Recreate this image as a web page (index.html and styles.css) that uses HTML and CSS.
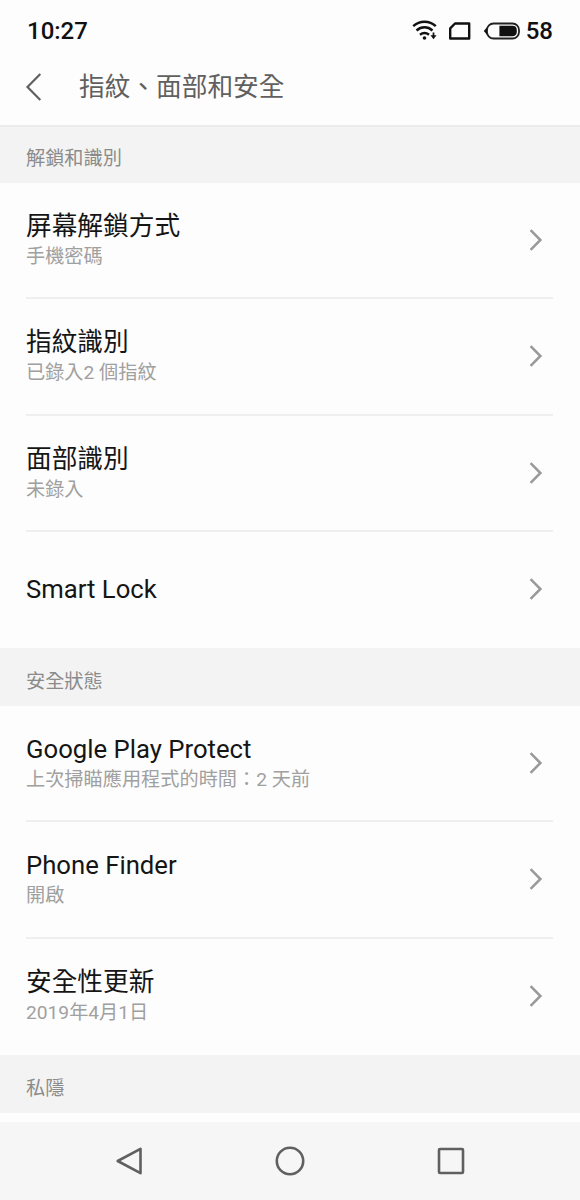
FILE: index.html
```html
<!DOCTYPE html>
<html lang="zh-Hant">
<head>
<meta charset="utf-8">
<title>指紋、面部和安全</title>
<link rel="stylesheet" href="styles.css">
</head>
<body>
<svg class="defs" width="0" height="0"><symbol id="chevron" viewBox="0 0 16 24"><path d="M2.6 2.2 12.4 12 2.6 21.8" fill="none" stroke="currentColor" stroke-width="2.5"/></symbol></svg>
<div class="screen">
  <div class="status">
    <span class="time">10:27</span>
    <svg class="wifi" width="26" height="22" viewBox="0 0 26 22" fill="none" stroke="#111" stroke-width="2.5">
      <path d="M1.2 6.1C7.7.2 17.3.2 23.8 6.1M4.5 10.5c4.8-4.2 11.2-4.2 16 0M8 14.7c2.7-2.1 6.3-2.1 9 0"/>
      <circle cx="12.5" cy="18" r="1.8" fill="#111" stroke="none"/>
      <path d="M21.5 12.5v4" stroke-width="1.7"/><path d="M18.5 15.3h6l-3 4z" fill="#111" stroke="none"/>
    </svg>
    <svg class="sim" width="24" height="20" viewBox="0 0 24 20"><path d="M7 2.5h14.2v15H2.2V7.3z" fill="none" stroke="#111" stroke-width="2.4" stroke-linejoin="round"/></svg>
    <svg class="battery" width="38" height="20" viewBox="0 0 38 20"><rect x="4" y="2.5" width="32" height="15" rx="6.5" fill="none" stroke="#222" stroke-width="1.8"/><path d="M4 6.3.8 10 4 13.7z" fill="#111"/><path d="M16.4 4.8h12.8q4.6 0 4.6 4.4v1.6q0 4.4-4.6 4.4H16.4z" fill="#111"/></svg>
    <span class="percent">58</span>
  </div>
  <div class="appbar">
    <svg class="back" width="20" height="30" viewBox="0 0 20 30"><path d="M16.3 2 3.5 15l12.8 13" fill="none" stroke="#606060" stroke-width="2.2"/></svg>
    <h1 class="heading">指紋、面部和安全</h1>
  </div>
  <h2 class="section first">解鎖和識別</h2>
  <div class="list">
    <div class="row"><div class="label"><div class="title">屏幕解鎖方式</div><div class="sub">手機密碼</div></div><svg class="chevron"><use href="#chevron"/></svg></div>
    <div class="row"><div class="label"><div class="title">指紋識別</div><div class="sub">已錄入2 個指紋</div></div><svg class="chevron"><use href="#chevron"/></svg></div>
    <div class="row"><div class="label"><div class="title">面部識別</div><div class="sub">未錄入</div></div><svg class="chevron"><use href="#chevron"/></svg></div>
    <div class="row"><div class="label"><div class="title">Smart Lock</div></div><svg class="chevron"><use href="#chevron"/></svg></div>
  </div>
  <h2 class="section">安全狀態</h2>
  <div class="list">
    <div class="row"><div class="label"><div class="title">Google Play Protect</div><div class="sub">上次掃瞄應用程式的時間：2 天前</div></div><svg class="chevron"><use href="#chevron"/></svg></div>
    <div class="row"><div class="label"><div class="title">Phone Finder</div><div class="sub">開啟</div></div><svg class="chevron"><use href="#chevron"/></svg></div>
    <div class="row"><div class="label"><div class="title">安全性更新</div><div class="sub">2019年4月1日</div></div><svg class="chevron"><use href="#chevron"/></svg></div>
  </div>
  <h2 class="section">私隱</h2>
  <div class="nav">
    <svg width="34" height="34" viewBox="0 0 34 34"><path d="M28.5 4.8v24.4L5.7 17z"/></svg>
    <svg width="34" height="34" viewBox="0 0 34 34"><circle cx="17" cy="17" r="13.2"/></svg>
    <svg width="34" height="34" viewBox="0 0 34 34"><rect x="5" y="5" width="24" height="24" rx="1"/></svg>
  </div>
</div>
</body>
</html>
```
FILE: styles.css
```css
* { box-sizing: border-box; }
body { margin: 0; background: #fdfdfd; font-family: Roboto, "Noto Sans CJK TC", sans-serif; }
.defs { display: block; }
.screen { width: 580px; height: 1200px; display: flex; flex-direction: column; overflow: hidden; }
.status { height: 61px; flex: none; display: flex; align-items: center; padding: 0 27px 0 27px; color: #111; font-size: 24px; font-weight: 500; }
.time { margin-right: auto; }
.wifi { margin-right: 10px; }
.sim { margin-right: 11px; }
.battery { margin-right: 5px; }
.appbar { height: 64px; flex: none; display: flex; align-items: center; padding: 0 24px 12px; }
.back { margin-right: 35px; }
.heading { margin: 0; font-size: 25.7px; font-weight: 400; line-height: 36px; color: #606060; }
.section { margin: 0; flex: none; height: 58.2px; padding: 20px 26px 0; background: #f3f3f3; color: #8b8b8b; font-size: 19.2px; font-weight: 400; line-height: 28px; }
.first { border-top: 2px solid #ebebeb; padding-top: 18px; }
.list { flex: none; padding: 0 27px 0 26px; }
.row { height: 116.2px; display: flex; align-items: center; justify-content: space-between; border-bottom: 2px solid #efefef; }
.row:last-child { border-bottom-color: transparent; }
.title { font-size: 25.7px; line-height: 34px; color: #151515; }
.sub { font-size: 19.2px; line-height: 28px; color: #a0a0a0; }
.chevron { width: 16px; height: 24px; margin-right: 9px; color: #999; }
.nav { margin-top: auto; height: 78px; flex: none; display: flex; align-items: center; justify-content: center; gap: 127px; background: #f6f6f6; }
.nav svg { fill: none; stroke: #606060; stroke-width: 2.6; stroke-linejoin: round; }
```
